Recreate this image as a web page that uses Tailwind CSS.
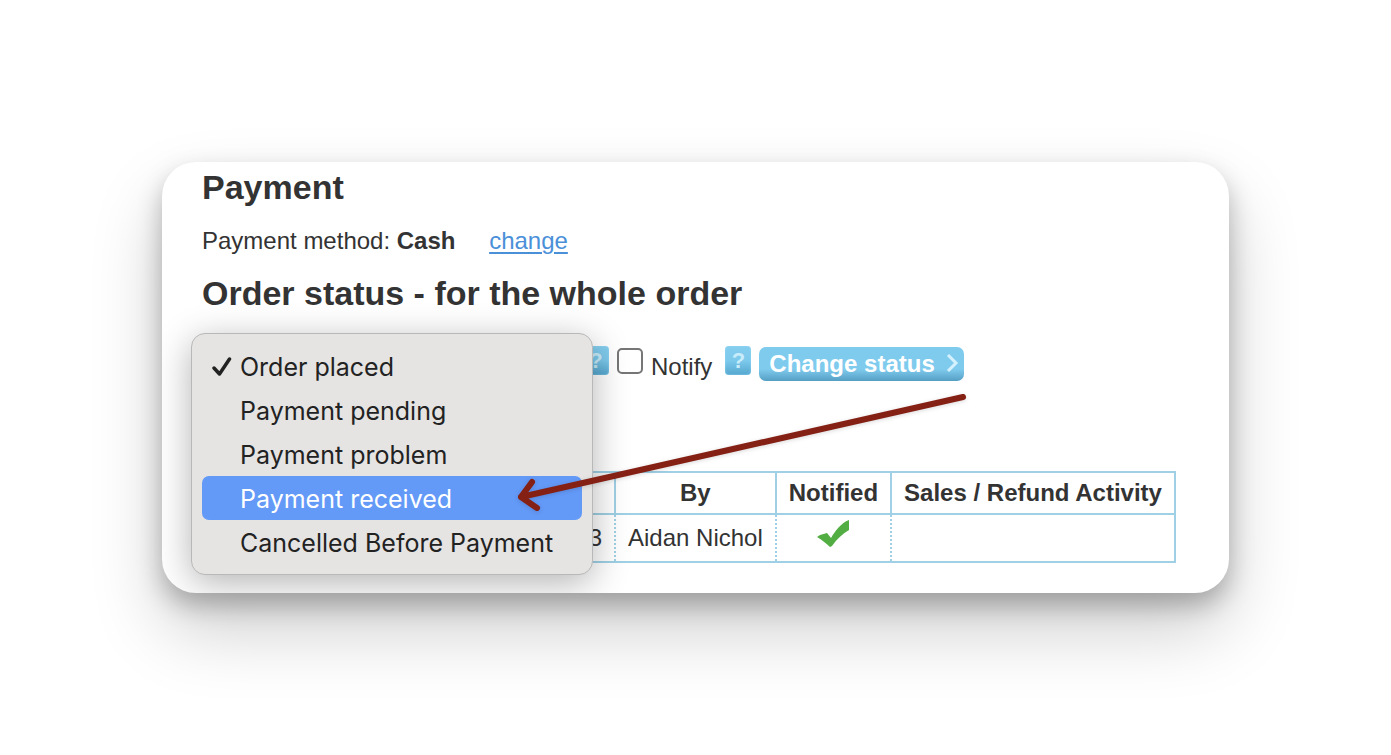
<!DOCTYPE html>
<html lang="en">
<head>
    <meta charset="UTF-8">
    <meta name="viewport" content="width=device-width, initial-scale=1.0">
    <title>Order status</title>
    <script src="https://cdn.jsdelivr.net/npm/@tailwindcss/browser@4"></script>
</head>
<body class="bg-white min-h-screen flex items-center justify-center font-['Liberation_Sans',Arial,sans-serif] text-[24px] leading-7 text-[#333]">
    <main class="relative w-full max-w-[1067px] overflow-hidden rounded-[34px] bg-white px-10 pt-[5px] pb-[30px] shadow-[0_12px_24px_rgba(0,0,0,0.25),0_36px_72px_rgba(0,0,0,0.2)]">
        <h2 class="text-[34px] leading-10 font-bold">Payment</h2>
        <p class="mt-5">Payment method: <b>Cash</b> <a href="#" class="ml-[27px] text-[#4a90d9] underline decoration-2 underline-offset-3">change</a></p>
        <h2 class="mt-[18px] text-[34px] leading-10 font-bold">Order status - for the whole order</h2>

        <form class="relative mt-[33px] flex items-start gap-2">
            <select aria-label="Order status" class="h-[30px] w-[373px] border border-gray-400 text-base">
                <option>Order placed</option>
                <option>Payment pending</option>
                <option>Payment problem</option>
                <option>Payment received</option>
                <option>Cancelled Before Payment</option>
            </select>
            <button type="button" class="h-[29px] w-[26px] rounded-[4px] bg-linear-to-b from-[#84cdef] via-[#7cc9ec] to-[#55a7cf] text-[22px] leading-7 font-bold text-[#c9ecfa] shadow-[inset_0_0_2px_#9edcf5]">?</button>
            <input type="checkbox" id="notify" class="mt-0.5 size-[26px] appearance-none rounded-[5px] border-2 border-[#767676] bg-white">
            <label for="notify" class="self-end">Notify</label>
            <button type="button" class="ml-[5px] h-[29px] w-[26px] rounded-[4px] bg-linear-to-b from-[#84cdef] via-[#7cc9ec] to-[#55a7cf] text-[22px] leading-7 font-bold text-[#c9ecfa] shadow-[inset_0_0_2px_#9edcf5]">?</button>
            <button type="button" class="mt-px flex h-[34px] items-center gap-[11px] rounded-[7px] bg-linear-to-b from-[#7fcbee] from-65% to-[#559fc4] pr-1 pl-[10px] font-bold text-white">
                Change status
                <svg class="h-5 w-[14px]" viewBox="0 0 14 20" fill="none" stroke="#d5f1fd" stroke-width="3"><path d="M2 1l8 8-8 8"/></svg>
            </button>

            <!-- open list of the drop-down -->
            <ul role="listbox" class="absolute -top-[13px] -left-[11px] w-[402px] rounded-[14px] border border-[#b9b8b8] bg-[#e5e4e2] p-[10px] font-['Inter',sans-serif] text-[25px] text-[#222] shadow-[0_8px_36px_rgba(0,0,0,0.3)]">
                <li role="option" aria-selected="true" class="flex h-11 items-center rounded-[7px] pt-0.5 pl-[10px]">
                    <svg class="mr-2 h-5 w-5" viewBox="0 0 20 20" fill="none" stroke="#222" stroke-width="3.500" stroke-linecap="round" stroke-linejoin="round"><path d="M2 11l5.500 6L17.500 2"/></svg>
                    Order placed
                </li>
                <li role="option" class="flex h-11 items-center rounded-[7px] pt-0.5 pl-[38px]">Payment pending</li>
                <li role="option" class="flex h-11 items-center rounded-[7px] pt-0.5 pl-[38px]">Payment problem</li>
                <li role="option" class="flex h-11 items-center rounded-[7px] bg-[#6399f7] pt-0.5 pl-[38px] text-white">Payment received</li>
                <li role="option" class="flex h-11 items-center rounded-[7px] pt-0.5 pl-[38px]">Cancelled Before Payment</li>
            </ul>
        </form>

        <table class="mt-[90px] border-collapse border-2 border-[#9fd0e5]">
            <thead>
                <tr class="h-[42px] border-b-2 border-[#9fd0e5]">
                    <th class="w-[412px] border-r-2 border-[#9fd0e5] px-3"></th>
                    <th class="border-r-2 border-[#9fd0e5] px-3">By</th>
                    <th class="border-r-2 border-[#9fd0e5] px-3">Notified</th>
                    <th class="px-3">Sales / Refund Activity</th>
                </tr>
            </thead>
            <tbody>
                <tr class="h-12">
                    <td class="border-r-2 border-dotted border-[#9fd0e5] px-3 text-right">3</td>
                    <td class="border-r-2 border-dotted border-[#9fd0e5] px-3">Aidan Nichol</td>
                    <td class="border-r-2 border-dotted border-[#9fd0e5] px-3">
                        <svg class="mx-auto mb-2 h-7 w-8" viewBox="0 0 32 28" fill="#52ad42"><path d="M0 17l3-2 7-2 4 5C18 11 24 3 32 0v10C25 14 20 19 15 26l-2 1C9 23 5 20 0 17z"/></svg>
                    </td>
                    <td class="px-3"></td>
                </tr>
            </tbody>
        </table>

        <svg class="pointer-events-none absolute top-[220px] left-[340px] h-[140px] w-[480px] drop-shadow-sm" viewBox="0 0 480 140" fill="none" stroke="#852015" stroke-width="6" stroke-linecap="round" stroke-linejoin="round"><path d="M461 15L19 115M30 100L19 115l16 11"/></svg>
    </main>
</body>
</html>
